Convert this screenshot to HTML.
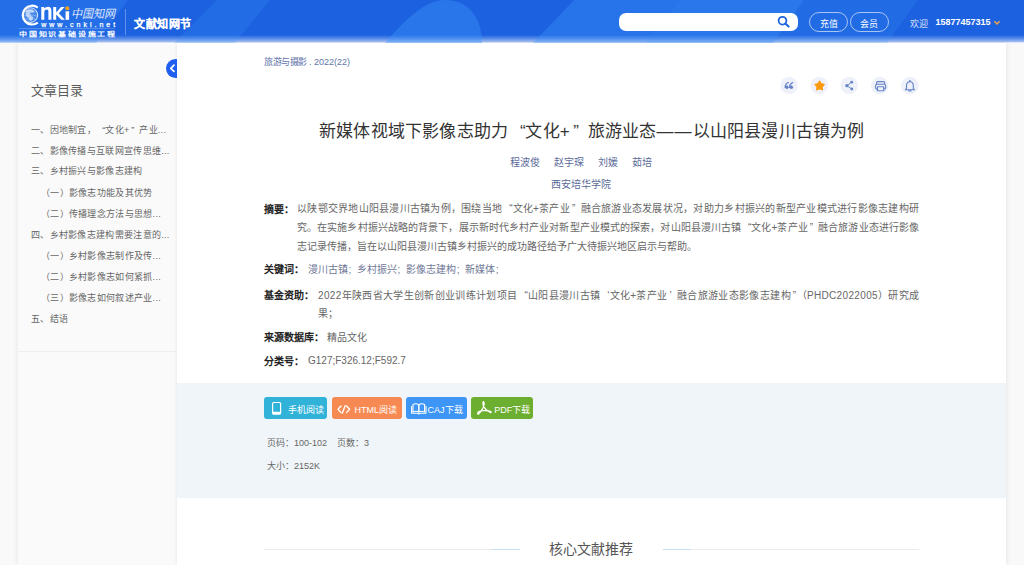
<!DOCTYPE html>
<html lang="zh-CN">
<head>
<meta charset="utf-8">
<style>
*{margin:0;padding:0;box-sizing:border-box;}
html,body{width:1024px;height:565px;overflow:hidden;}
body{position:relative;background:#f9f9f9;font-family:"Liberation Sans",sans-serif;color:#333;}
.abs{position:absolute;white-space:nowrap;}
#hdr{position:absolute;left:0;top:0;width:1024px;height:43px;background:#1c62e0;overflow:hidden;}
#hdr .fade{position:absolute;left:0;top:35px;width:1024px;height:8px;background:linear-gradient(rgba(255,255,255,0),rgba(255,255,255,0.3) 50%,rgba(255,255,255,0.6) 85%,#fff);}
#side{position:absolute;left:18px;top:43px;width:159px;height:522px;background:#fafafa;box-shadow:-2px 0 4px rgba(0,0,0,0.05);}
#sline{position:absolute;left:18px;top:351px;width:159px;height:1px;background:#efefef;}
#main{position:absolute;left:177px;top:43px;width:829px;height:522px;background:#fff;box-shadow:2px 0 4px rgba(0,0,0,0.05),-1px 0 3px rgba(0,0,0,0.05);}
#band{position:absolute;left:177px;top:383px;width:829px;height:115px;background:#f0f5f9;}
.toc{position:absolute;left:31px;font-size:9px;letter-spacing:0.3px;color:#666;white-space:nowrap;}
.lbl{font-weight:bold;color:#222;}
.txt{font-size:10px;color:#666;}
.jl{width:622px;text-align:justify;text-align-last:justify;}
.lbl{font-weight:bold;color:#222;}
.btn{position:absolute;top:397px;height:22px;border-radius:3px;color:#fff;font-size:9.5px;}
.ql{margin-left:0.69em;margin-right:-0.02em;}
.qr{margin-left:0.19em;margin-right:0.51em;}
.sc{font-style:normal;margin-left:0.5px;margin-right:5.8px;}
.ico{position:absolute;top:77px;width:18px;height:18px;border-radius:50%;background:#eef1fa;}
</style>
</head>
<body>
<div id="hdr">
  <div class="fade"></div>
</div>
<div id="side"></div>
<div id="sline"></div>
<div id="main"></div>
<div id="band"></div>

<!-- header content -->
<svg class="abs" style="left:0;top:0;" width="1024" height="43" viewBox="0 0 1024 43">
  <!-- background shapes -->
  <polygon points="0,0 128,0 96,43 0,43" fill="rgba(60,150,250,0.25)"/>
  <polygon points="217,0 270,0 235,43 174,43" fill="rgba(60,150,250,0.22)"/>
  <path d="M385,43 C405,20 425,0 445,0 C470,0 482,20 482,43 Z" fill="rgba(60,150,250,0.4)"/>
  <polygon points="574,0 804,0 773,43 533,43" fill="rgba(60,150,250,0.35)"/>
  <polygon points="680,0 804,0 773,43 646,43" fill="rgba(60,150,250,0.15)"/>
  <polygon points="804,0 918,0 887,43 773,43" fill="rgba(60,150,250,0.18)"/>
  <!-- globe -->
  <path d="M37.8,7.6 A9.4,9.4 0 1 0 37.8,22.6" fill="none" stroke="#fff" stroke-width="2.2"/>
  <circle cx="30.3" cy="15.1" r="7.4" fill="rgba(255,255,255,0.18)" stroke="rgba(255,255,255,0.9)" stroke-width="0.9"/>
  <path d="M23.5,12 Q30,9 37,12 M23,16 Q30,13.5 37.6,16 M24,19.5 Q30,17.5 36.5,19.5" fill="none" stroke="rgba(255,255,255,0.45)" stroke-width="0.6"/>
  <path d="M26,10 Q29,8.8 32.5,9.6 Q34.8,10.8 33.8,12.6 Q31,12 29.6,13.6 Q31,15.6 33.2,17.2 Q33.6,20 30.4,21 Q28,20 28.8,18.2 Q26,17 25.5,14 Z" fill="rgba(255,255,255,0.6)"/>
  <!-- nKi -->
  <path d="M41.3,19.8 V7 H44.2 V8.4 Q45.8,6.7 48,6.7 Q51.4,6.7 51.4,10.6 V19.8 H48.4 V11.2 Q48.4,9.4 46.9,9.4 Q44.3,9.4 44.3,12.2 V19.8 Z" fill="#fff"/>
  <path d="M53.2,7 H56.2 V12.4 L61,7 H64.6 L58.8,13.2 L64.9,19.8 H61.2 L56.2,14.4 V19.8 H53.2 Z" fill="#fff"/>
  <rect x="65.6" y="11.3" width="3.5" height="8.5" fill="#fff"/>
  <circle cx="67.3" cy="8.3" r="2" fill="#f7a21b"/>
  <text x="71.4" y="18" textLength="44" lengthAdjust="spacingAndGlyphs" font-family="Liberation Serif" font-size="12" fill="#fff" stroke="#2a6ee4" stroke-width="0.15" style="font-style:italic">中国知网</text>
  <text x="41.2" y="26.6" textLength="74" lengthAdjust="spacing" font-family="Liberation Sans" font-size="7" fill="#fff" stroke="#fff" stroke-width="0.25">www.cnki.net</text>
  <rect x="19" y="28" width="96" height="0.6" fill="rgba(255,255,255,0.35)"/>
  <g transform="translate(0,36.2) scale(1,0.78)"><text x="19" y="0" textLength="96" lengthAdjust="spacing" font-family="Liberation Sans" font-weight="bold" font-size="8" fill="#fff">中国知识基础设施工程</text></g>
  <!-- divider -->
  <rect x="125" y="9" width="1" height="26" fill="rgba(255,255,255,0.3)"/>
  <!-- dropdown -->
  <path d="M994.3,21.2 L997,23.9 L999.7,21.2" fill="none" stroke="#e8a04c" stroke-width="1.5"/>
</svg>
<div class="abs" style="left:134px;top:15px;font-size:11px;letter-spacing:0.5px;font-weight:bold;color:#fff;-webkit-text-stroke:0.2px #fff;">文献知网节</div>
<div class="abs" style="left:619px;top:13px;width:179px;height:18px;border-radius:7px;background:#fff;"></div>
<svg class="abs" style="left:0;top:0;" width="1024" height="43">
  <!-- search icon -->
  <circle cx="782.5" cy="20.7" r="3.9" fill="none" stroke="#1c62e0" stroke-width="1.8"/>
  <path d="M785.3,23.5 L788.6,26.6" stroke="#1c62e0" stroke-width="2" stroke-linecap="round"/>
</svg>
<div class="abs" style="left:809px;top:12px;width:39px;height:20px;border-radius:10px;border:1px solid rgba(255,255,255,0.6);"></div>
<div class="abs" style="left:850px;top:12px;width:39px;height:20px;border-radius:10px;border:1px solid rgba(255,255,255,0.6);"></div>
<div class="abs" style="left:820px;top:16.5px;font-size:9px;color:#fff;">充值</div>
<div class="abs" style="left:860px;top:16.5px;font-size:9px;color:#fff;">会员</div>
<div class="abs" style="left:910px;top:17px;font-size:9px;color:rgba(255,255,255,0.85);">欢迎</div>
<div class="abs" style="left:935.5px;top:16.5px;font-size:9px;font-weight:bold;color:#fff;">15877457315</div>

<!-- sidebar -->
<div class="abs" style="left:166px;top:58.5px;width:11px;height:19.5px;overflow:hidden;">
 <div style="position:absolute;left:0;top:0;width:19.5px;height:19.5px;border-radius:50%;background:#1e5ff0;"></div>
 <svg style="position:absolute;left:0;top:0" width="11" height="20"><path d="M8,6.2 L4.8,9.3 L8,12.4" fill="none" stroke="#fff" stroke-width="1.7" stroke-linecap="round" stroke-linejoin="round"/></svg>
</div>
<div class="abs" style="left:31px;top:79.5px;font-size:13px;color:#5c5c5c;">文章目录</div>
<div class="toc" style="top:122.5px;">一、因地制宜，<span class="ql">“</span>文化+<span class="qr">”</span>产业...</div>
<div class="toc" style="top:144.1px;">二、影像传播与互联网宣传思维...</div>
<div class="toc" style="top:164.3px;">三、乡村振兴与影像志建构</div>
<div class="toc" style="top:186.3px;left:41px;">（一）影像志功能及其优势</div>
<div class="toc" style="top:207.3px;left:41px;">（二）传播理念方法与思想...</div>
<div class="toc" style="top:228.4px;">四、乡村影像志建构需要注意的...</div>
<div class="toc" style="top:249.3px;left:41px;">（一）乡村影像志制作及传...</div>
<div class="toc" style="top:269.8px;left:41px;">（二）乡村影像志如何紧抓...</div>
<div class="toc" style="top:291.1px;left:41px;">（三）影像志如何叙述产业...</div>
<div class="toc" style="top:312.1px;">五、结语</div>

<!-- main -->
<div class="abs" style="left:264px;top:55px;font-size:9px;color:#6274ab;"><span style="letter-spacing:-0.5px">旅游与摄影</span> . 2022(22)</div>
<svg class="abs" style="left:770px;top:70px;" width="150" height="30" viewBox="770 70 150 30">
 <circle cx="789.1" cy="85.4" r="8.7" fill="#eef1fa"/>
 <circle cx="819.2" cy="85.4" r="8.7" fill="#eef1fa"/>
 <circle cx="849.2" cy="85.4" r="8.7" fill="#eef1fa"/>
 <circle cx="879.7" cy="85.6" r="8.8" fill="#eef1fa"/>
 <circle cx="909.8" cy="85.6" r="8.8" fill="#eef1fa"/>
 <!-- quote -->
 <g fill="#6683c6"><circle cx="786.9" cy="87.2" r="1.75"/><circle cx="791.3" cy="87.2" r="1.75"/></g>
 <g fill="none" stroke="#6683c6" stroke-width="1.3" stroke-linecap="round"><path d="M785.2,87.4 Q785,84.2 788.3,82.5"/><path d="M789.6,87.4 Q789.4,84.2 792.7,82.5"/></g>
 <!-- star -->
 <path d="M819.60,81.30 L821.07,83.88 L823.97,84.48 L821.98,86.67 L822.30,89.62 L819.60,88.40 L816.90,89.62 L817.22,86.67 L815.23,84.48 L818.13,83.88 Z" fill="#fb9a0e" stroke="#fb9a0e" stroke-width="1.6" stroke-linejoin="round"/>
 <!-- share -->
 <g fill="#6683c6"><circle cx="846.9" cy="85.7" r="1.65"/><circle cx="851.7" cy="82.2" r="1.4"/><circle cx="851.8" cy="89" r="1.4"/></g>
 <path d="M846.9,85.7 L851.7,82.2 M846.9,85.7 L851.8,89" stroke="#6683c6" stroke-width="0.9" fill="none"/>
 <!-- print -->
 <g fill="none" stroke="#6683c6" stroke-width="1.15" stroke-linejoin="round">
  <path d="M876.6,84.2 V82.6 Q876.6,81.6 877.6,81.6 H883.6 Q884.6,81.6 884.6,82.6 V84.2"/>
  <rect x="875.5" y="84.2" width="10.2" height="4.9" rx="1.7"/>
  <rect x="877.5" y="86.7" width="6.2" height="4" fill="#eef1fa"/>
 </g>
 <!-- bell -->
 <g fill="none" stroke="#6683c6" stroke-width="1.1" stroke-linejoin="round" stroke-linecap="round">
  <path d="M906.5,88.7 V85.8 Q906.5,81.7 909.9,81.7 Q913.3,81.7 913.3,85.8 V88.7 L914.5,89.7 H905.3 Z"/>
  <path d="M908.6,90.6 Q909.9,91.6 911.2,90.6"/>
 </g>
 <circle cx="909.9" cy="81" r="0.9" fill="#6683c6"/>
</svg>

<div class="abs" style="left:319px;top:117px;font-size:17px;letter-spacing:0.2px;color:#333;">新媒体视域下影像志助力<span class="ql">“</span>文化+<span class="qr">”</span>旅游业态<span style="letter-spacing:1px">——</span>以山阳县漫川古镇为例</div>
<div class="abs" style="left:510px;top:154.3px;font-size:10px;color:#5b6a99;">程波俊</div>
<div class="abs" style="left:554px;top:154.3px;font-size:10px;color:#5b6a99;">赵宇琛</div>
<div class="abs" style="left:598px;top:154.3px;font-size:10px;color:#5b6a99;">刘媛</div>
<div class="abs" style="left:632px;top:154.3px;font-size:10px;color:#5b6a99;">茹培</div>
<div class="abs" style="left:551px;top:176.3px;font-size:10px;color:#5b6a99;">西安培华学院</div>

<div class="abs txt" style="left:264px;top:201px;"><span class="lbl">摘要：</span></div>
<div class="abs txt" style="left:297px;top:200px;letter-spacing:0.263px;">以陕鄂交界地山阳县漫川古镇为例，围绕当地<span class="ql">“</span>文化+茶产业<span class="qr">”</span>融合旅游业态发展状况，对助力乡村振兴的新型产业模式进行影像志建构研</div>
<div class="abs txt" style="left:297px;top:219px;letter-spacing:0.095px;">究。在实施乡村振兴战略的背景下，展示新时代乡村产业对新型产业模式的探索，对山阳县漫川古镇<span class="ql">“</span>文化+茶产业<span class="qr">”</span>融合旅游业态进行影像</div>
<div class="abs txt" style="left:297px;top:238px;">志记录传播，旨在以山阳县漫川古镇乡村振兴的成功路径给予广大待振兴地区启示与帮助。</div>
<div class="abs txt" style="left:264px;top:261px;"><span class="lbl">关键词：</span></div>
<div class="abs txt" style="left:308px;top:261px;color:#6f7897;">漫川古镇<i class="sc">;</i>乡村振兴<i class="sc">;</i>影像志建构<i class="sc">;</i>新媒体<i class="sc">;</i></div>
<div class="abs txt" style="left:264px;top:287px;"><span class="lbl">基金资助：</span></div>
<div class="abs txt" style="left:318px;top:287px;letter-spacing:0.345px;">2022年陕西省大学生创新创业训练计划项目<span class="ql">“</span>山阳县漫川古镇<span class="ql">‘</span>文化+茶产业<span class="qr">’</span>融合旅游业态影像志建构<span class="qr">”</span>（PHDC2022005）研究成</div>
<div class="abs txt" style="left:318px;top:305px;">果；</div>
<div class="abs txt" style="left:264px;top:329px;"><span class="lbl">来源数据库：</span></div>
<div class="abs txt" style="left:327px;top:329px;">精品文化</div>
<div class="abs txt" style="left:264px;top:353px;"><span class="lbl">分类号：</span></div>
<div class="abs txt" style="left:308px;top:354.5px;">G127;F326.12;F592.7</div>

<div class="btn" style="left:264px;width:63px;background:#31b3d9;"></div>
<div class="btn" style="left:331.5px;width:70px;background:#f78a52;"></div>
<div class="btn" style="left:405.7px;width:61.3px;background:#3d95f5;"></div>
<div class="btn" style="left:471px;width:62.3px;background:#6cae2f;"></div>
<svg class="abs" style="left:260px;top:395px;" width="280" height="28" viewBox="260 395 280 28">
 <g fill="none" stroke="#fff" stroke-width="1.2">
  <rect x="272.6" y="402.5" width="8" height="11.6" rx="1"/>
 </g>
 <rect x="272.6" y="411.8" width="8" height="2.3" fill="#fff"/>
 <g fill="none" stroke="#fff" stroke-width="1.4" stroke-linecap="round" stroke-linejoin="round">
  <path d="M341,406 L338,409.3 L341,412.6"/>
  <path d="M346.6,406 L349.6,409.3 L346.6,412.6"/>
  <path d="M345.3,405.6 L342.3,413"/>
 </g>
 <g fill="none" stroke="#fff" stroke-width="1.1" stroke-linejoin="round">
  <path d="M413,404.5 Q416,403 418.8,404.8 V412 Q416,410.5 413,412 Z"/>
  <path d="M424.6,404.5 Q421.6,403 418.8,404.8 V412 Q421.6,410.5 424.6,412 Z"/>
  <path d="M411.6,406 V413.3 H417.3 L418.8,414 L420.3,413.3 H426 V406"/>
 </g>
 <g fill="none" stroke="#fff" stroke-width="1.3" stroke-linecap="round" stroke-linejoin="round">
  <path d="M483.6,401.6 Q482.3,402.5 483.4,405.5 Q485,410 490.4,412.4 Q491.5,413 490.8,411.6 Q489,410.3 482.5,410.6 Q478,411 477.6,413.5 Q477.6,414.6 479,413.6 Q481,412 483.2,407.5 Q484.8,403.5 483.6,401.6 Z"/>
 </g>
</svg>
<div class="abs" style="left:287.5px;top:403px;font-size:9px;color:#fff;">手机阅读</div>
<div class="abs" style="left:354.5px;top:403px;font-size:9px;color:#fff;">HTML阅读</div>
<div class="abs" style="left:427.6px;top:403px;font-size:9px;color:#fff;">CAJ下载</div>
<div class="abs" style="left:494.3px;top:403px;font-size:9px;color:#fff;">PDF下载</div>

<div class="abs" style="left:267px;top:436px;font-size:9px;color:#666;">页码：100-102</div>
<div class="abs" style="left:337px;top:436px;font-size:9px;color:#666;">页数：3</div>
<div class="abs" style="left:267px;top:459px;font-size:9px;color:#666;">大小：2152K</div>

<div class="abs" style="left:264px;top:549px;width:655px;height:1px;background:repeating-linear-gradient(90deg,#e2e2e2 0 1px,#f4f4f4 1px 2px);"></div>
<div class="abs" style="left:492px;top:548.5px;width:28px;height:1.5px;background:#c8ddf6;"></div>
<div class="abs" style="left:663px;top:548.5px;width:28px;height:1.5px;background:#c8ddf6;"></div>
<div class="abs" style="left:520px;top:540px;width:143px;height:20px;background:#fff;"></div>
<div class="abs" style="left:548.5px;top:537.5px;font-size:14px;color:#555;">核心文献推荐</div>
</body>
</html>
